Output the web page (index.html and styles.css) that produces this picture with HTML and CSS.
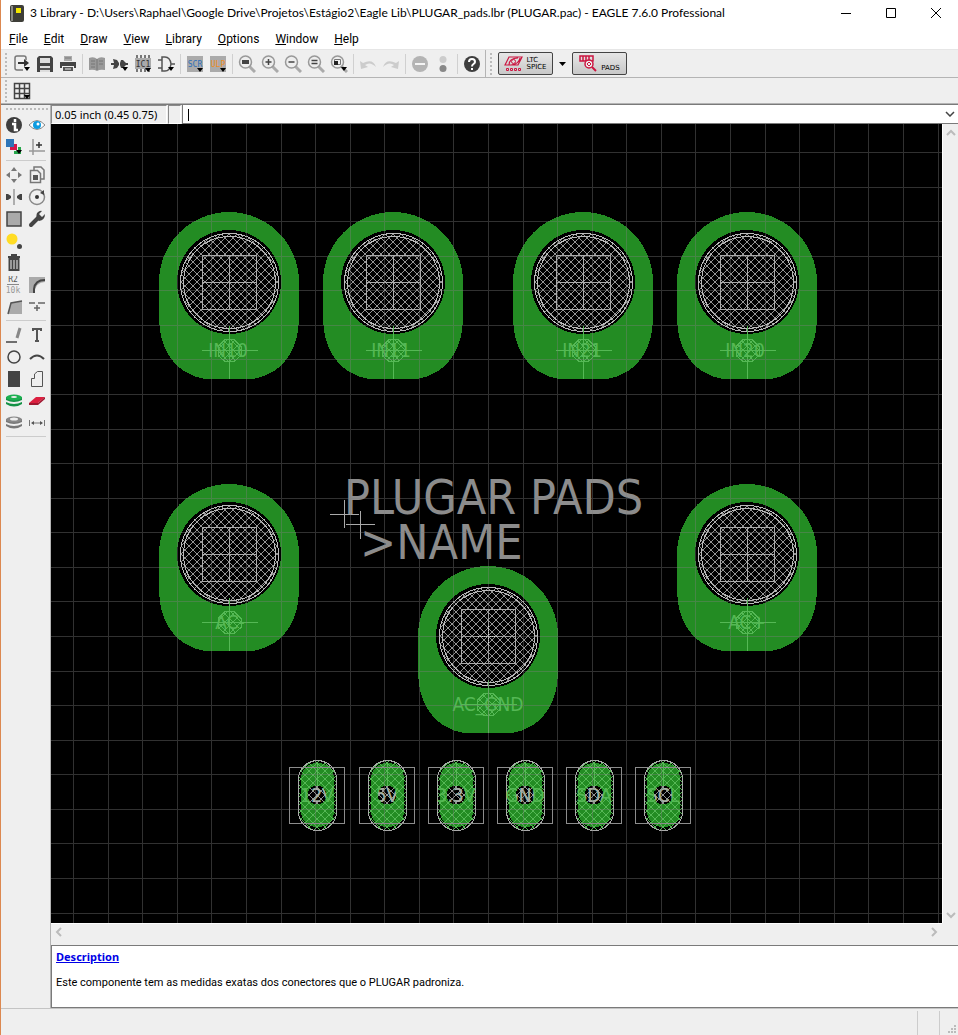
FILE: index.html
```html
<!DOCTYPE html>
<html lang="en">
<head>
<meta charset="utf-8">
<title>3 Library - EAGLE 7.6.0 Professional</title>
<link rel="stylesheet" href="styles.css">
</head>
<body>
<div class="window">
  <header class="titlebar">
    <svg class="app-icon" width="14" height="17" viewBox="0 0 14 17"><rect width="14" height="17" rx="2" fill="#3e3e38"/><path d="M1 1h2v15H1z" fill="#8a8a84"/><path d="M6 3h5v5H6z" fill="#f4e800"/></svg>
    <h1 class="title">3 Library - D:\Users\Raphael\Google Drive\Projetos\Estágio2\Eagle Lib\PLUGAR_pads.lbr (PLUGAR.pac) - EAGLE 7.6.0 Professional</h1>
    <div class="window-buttons">
      <button aria-label="Minimize"><svg width="12" height="12"><path d="M1 6.500h10" stroke="#000"/></svg></button>
      <button aria-label="Maximize"><svg width="12" height="12"><path d="M1.500 1.500h9v9h-9z" stroke="#000" fill="none"/></svg></button>
      <button aria-label="Close"><svg width="12" height="12"><path d="M1 1l10 10M11 1L1 11" stroke="#000"/></svg></button>
    </div>
  </header>
  <nav class="menubar">
    <button><u>F</u>ile</button><button><u>E</u>dit</button><button><u>D</u>raw</button><button><u>V</u>iew</button><button><u>L</u>ibrary</button><button><u>O</u>ptions</button><button><u>W</u>indow</button><button><u>H</u>elp</button>
  </nav>

  <div class="toolbar">
    <i class="grip"></i>
    <div class="actions">
      <button aria-label="Open"><svg viewBox="0 0 18 18"><path d="M13 5V3q0-2-2-2H4Q2 1 2 3v10q0 2 2 2h6" fill="none" stroke="#777" stroke-width="1.500"/><path d="M5 7h6V4l5 4-5 4V9H5z" fill="#333"/><path class="drop" d="M11 12h6l-3 4z"/></svg></button>
      <button aria-label="Save"><svg viewBox="0 0 18 18"><path d="M1 3l2-2h12l2 2v14H1z" fill="#444"/><path d="M4 3h10v5H4zM4 11h10v6H4z" fill="#ddd"/><path d="M4 13h10v2H4z" fill="#555"/></svg></button>
      <button aria-label="Print"><svg viewBox="0 0 18 18"><path d="M5 1h8v5H5z" fill="#aaa"/><path d="M6 3h6" stroke="#777"/><path d="M1 7h16v6h-2v-2H3v2H1z" fill="#444"/><path d="M4 12h10v4H4z" fill="#555"/><path d="M6 14h6" stroke="#eee"/></svg></button>
      <i class="sep"></i>
      <button aria-label="Use"><svg viewBox="0 0 18 18"><path d="M1 3q5-2 8 1 3-3 8-1v12q-5-1-8 1-3-2-8-1z" fill="#999"/><path d="M9 4v11M3 6h4M3 9h4M3 12h4M11 6h4M11 9h4" stroke="#777"/></svg></button>
      <button aria-label="Device"><svg viewBox="0 0 18 18"><path d="M2 4l4 1 2 3v2l-2 3-4 1 1-4H0V8h3zM10 5h2l3 3h2v2h-2l-3 3h-2l-1-3V8z" fill="#444"/><path class="drop" d="M11 12h6l-3 4z"/></svg></button>
      <button aria-label="Package"><svg viewBox="0 0 18 18"><path d="M3 0v17M7 0v17M11 0v17M15 0v17" stroke="#777" stroke-width="2" stroke-dasharray="3 11 3"/><path d="M1 3h16v11H1z" fill="#aaa"/><text x="9" y="12" class="tiny" fill="#333">IC1</text><path class="drop" d="M11 13h6l-3 4z"/></svg></button>
      <button aria-label="Symbol"><svg viewBox="0 0 18 18"><path d="M5 2h3q5 0 6 7-1 7-6 7H5zM1 5h4M1 13h4M14 9h4" fill="none" stroke="#555" stroke-width="1.500"/><path class="drop" d="M11 12h6l-3 4z"/></svg></button>
      <i class="sep"></i>
      <button aria-label="Script"><svg viewBox="0 0 18 18"><path d="M1 1h16v16H1z" fill="#aaa"/><text x="9" y="12" class="tiny" fill="#2f70b8">SCR</text><path class="drop" d="M11 13h6l-3 4z"/></svg></button>
      <button aria-label="Run ULP"><svg viewBox="0 0 18 18"><path d="M1 1h16v16H1z" fill="#aaa"/><text x="9" y="12" class="tiny" fill="#f08c1e">ULP</text><path class="drop" d="M11 13h6l-3 4z"/></svg></button>
      <i class="sep"></i>
      <button aria-label="Fit"><svg viewBox="0 0 18 18"><use href="#lens"/><path d="M4 5h7v4H4z" fill="#444"/></svg></button>
      <button aria-label="Zoom in"><svg viewBox="0 0 18 18"><use href="#lens"/><path d="M4.500 7h6M7.500 4v6" stroke="#444" stroke-width="1.500"/></svg></button>
      <button aria-label="Zoom out"><svg viewBox="0 0 18 18"><use href="#lens"/><path d="M4.500 7h6" stroke="#444" stroke-width="1.500"/></svg></button>
      <button aria-label="Redraw"><svg viewBox="0 0 18 18"><use href="#lens"/><path d="M4.500 5.500h6M4.500 8.500h6" stroke="#444" stroke-width="1.500"/></svg></button>
      <button aria-label="Zoom select"><svg viewBox="0 0 18 18"><use href="#lens"/><path d="M4.500 4.500h6v5h-6z" fill="none" stroke="#777"/><path d="M4 6h4v4H4z" fill="#222"/><path class="drop" d="M11 12h6l-3 4z"/></svg></button>
      <i class="sep"></i>
      <button aria-label="Undo" disabled><svg viewBox="0 0 18 18"><path d="M1 6l1 8 7-2-3-2q5-4 11 2-3-9-13-4z" fill="#ccc"/></svg></button>
      <button aria-label="Redo" disabled><svg viewBox="0 0 18 18"><path d="M17 6l-1 8-7-2 3-2q-5-4-11 2 3-9 13-4z" fill="#ccc"/></svg></button>
      <i class="sep"></i>
      <button aria-label="Stop" disabled><svg viewBox="0 0 18 18"><circle cx="9" cy="9" r="8" fill="#b4b4b4"/><path d="M4 9h10" stroke="#f4f4f4" stroke-width="2"/></svg></button>
      <button aria-label="Go" disabled><svg viewBox="0 0 18 18"><circle cx="9" cy="4.500" r="3.500" fill="#ccc"/><circle cx="9" cy="13.500" r="3.500" fill="#888"/></svg></button>
      <i class="sep"></i>
      <button aria-label="Help"><svg viewBox="0 0 18 18"><circle cx="9" cy="9" r="8" fill="#3e3e3e"/><path d="M6 7q0-3 3-3t3 3q0 1-1.500 2T9 11.500M9 13v2" fill="none" stroke="#fff" stroke-width="2"/></svg></button>
    </div>
    <i class="grip"></i>
    <div class="plugins">
      <button class="plugin"><svg width="19" height="17" viewBox="0 0 19 17"><path d="M1 10L5 2h13l-4 8zM5 10q0-7 9-7M7 10q8-1 9-7" fill="none" stroke="#cc1540" stroke-width="1.200"/><circle cx="9.500" cy="6.500" r="2" fill="#ddd" stroke="#cc1540"/><path d="M2.500 13.500h2v2h-2zM6.500 13.500h2v2h-2zM10.500 13.500h2v2h-2zM14.500 13.500h2v2h-2z" fill="none" stroke="#cc1540"/></svg><span>LTC<br>SPICE</span></button>
      <button class="plugin-more" aria-label="More"><svg width="7" height="4"><path d="M0 0h7L3.500 4z"/></svg></button>
      <button class="plugin pads"><svg width="19" height="17" viewBox="0 0 19 17"><path d="M1 1h13v5H1zM4 1v5M7 1v5M10 1v5" fill="none" stroke="#cc1540" stroke-width="1.500"/><circle cx="10" cy="9" r="4" fill="#eee" stroke="#cc1540" stroke-width="1.500"/><path d="M13 12l4 4" stroke="#cc1540" stroke-width="2"/><path d="M8 9l2-2 2 2-2 2z" fill="none" stroke="#cc1540"/></svg><span>PADS</span></button>
    </div>
  </div>
  <div class="toolbar parameters">
    <i class="grip"></i>
    <button aria-label="Grid"><svg viewBox="0 0 18 18"><path d="M1.500 1.500h15v15h-15zM1 6.500h16M1 11.500h16M6.500 1v16M11.500 1v16" fill="none" stroke="#444" stroke-width="1.500"/><path class="drop" d="M11 13h6l-3 4z"/></svg></button>
  </div>

  <div class="workspace">
    <aside class="palette">
      <i class="grip-top"></i>
      <div class="tools">
        <button aria-label="Info"><svg viewBox="0 0 18 18"><circle cx="9" cy="9" r="8" fill="#3e3e3e"/><path d="M10 3v3M7 8h3v6h3" fill="none" stroke="#fff" stroke-width="2.500"/></svg></button>
        <button aria-label="Show"><svg viewBox="0 0 18 18"><path d="M1 9q8-9 16 0-8 9-16 0z" fill="#fff" stroke="#888"/><circle cx="9" cy="9" r="4" fill="#0c9be0"/><circle cx="10" cy="8" r="1.500" fill="#fff"/></svg></button>
        <button aria-label="Display"><svg viewBox="0 0 18 18"><path d="M1 1h8v8H1z" fill="#2e75b8"/><path d="M9 6h3v6H5V9h4z" fill="#d6184c"/><path d="M13 9h3v7H9v-3h4z" fill="#26a64a"/><path class="drop" d="M11 12h6l-3 4z"/></svg></button>
        <button aria-label="Mark"><svg viewBox="0 0 18 18"><path d="M5 1v16M1 13h16" stroke="#999" stroke-width="1.500"/><path d="M8 7h6M11 4v6" stroke="#333" stroke-width="1.500"/></svg></button>
        <i class="rule"></i>
        <button aria-label="Move"><svg viewBox="0 0 18 18"><path d="M9 1l3 4H6zM9 17l3-4H6zM1 9l4-3v6zM17 9l-4-3v6z" fill="#777"/></svg></button>
        <button aria-label="Copy"><svg viewBox="0 0 18 18"><path d="M6 4V1h7l3 3v9h-3M2.500 4.500h7l3 3v9h-10z" fill="none" stroke="#777" stroke-width="1.500"/><path d="M5 9h5v5H5z" fill="#555"/></svg></button>
        <button aria-label="Mirror"><svg viewBox="0 0 18 18"><path d="M9 1v16" stroke="#999" stroke-width="1.500"/><path d="M1 6h2l3 2v2l-3 2H1zM17 6h-2l-3 2v2l3 2h2z" fill="#444"/></svg></button>
        <button aria-label="Rotate"><svg viewBox="0 0 18 18"><circle cx="9" cy="9" r="7.500" fill="none" stroke="#888" stroke-width="1.500"/><circle cx="9" cy="9" r="2" fill="#333"/><path d="M12 5l4-3v5z" fill="#444"/></svg></button>
        <button aria-label="Group"><svg viewBox="0 0 18 18"><path d="M2 2h14v14H2z" fill="#aaa" stroke="#444" stroke-width="1.500"/></svg></button>
        <button aria-label="Change"><svg viewBox="0 0 18 18"><path d="M3 15l7-7" stroke="#444" stroke-width="4" stroke-linecap="round"/><path d="M9 3q3-3 5-2l-3 3 3 3 3-3q0 6-6 7-4-3-2-8z" fill="#444"/></svg></button>
        <button aria-label="Paste"><svg viewBox="0 0 18 18"><circle cx="7" cy="7" r="5.500" fill="#ffdc24"/><circle cx="14.500" cy="14.500" r="2.500" fill="#444"/></svg></button>
        <span></span>
        <button aria-label="Delete"><svg viewBox="0 0 18 18"><path d="M3 3h12M7 3V1h4v2M4.500 5h9v11h-9zM7.500 6v9M10.500 6v9" fill="none" stroke="#444" stroke-width="2"/></svg></button>
        <span></span>
        <button aria-label="Name"><svg viewBox="0 0 18 18"><text x="8" y="6" class="tiny" fill="#555">R2</text><path d="M2 8.500h12" stroke="#888"/><text x="8" y="17" class="tiny" fill="#999">10k</text></svg></button>
        <button aria-label="Miter"><svg viewBox="0 0 18 18"><path d="M1 1h16v5Q8 6 6 17H1z" fill="#aaa"/><path d="M6 17V13Q7 4 17 4" fill="none" stroke="#444" stroke-width="2"/></svg></button>
        <button aria-label="Split"><svg viewBox="0 0 18 18"><path d="M3 16L6 5l11-2v13z" fill="#aaa"/><path d="M3 16L6 5l11-2" fill="none" stroke="#555" stroke-width="1.500"/></svg></button>
        <button aria-label="Optimize"><svg viewBox="0 0 18 18"><path d="M1 5h6M10 5h7M6 10h6M9 7v6" stroke="#666" stroke-width="1.500"/></svg></button>
        <i class="rule"></i>
        <button aria-label="Wire"><svg viewBox="0 0 18 18"><path d="M1 16h11" stroke="#444" stroke-width="1.500"/><path d="M15 2l-3 10" stroke="#888" stroke-width="3"/></svg></button>
        <button aria-label="Text"><svg viewBox="0 0 18 18"><path d="M5 5V3h8v2M9 3v12M7 15h4" fill="none" stroke="#555" stroke-width="2"/></svg></button>
        <button aria-label="Circle"><svg viewBox="0 0 18 18"><circle cx="9" cy="9" r="6" fill="none" stroke="#444" stroke-width="1.500"/></svg></button>
        <button aria-label="Arc"><svg viewBox="0 0 18 18"><path d="M2 11q7-7 14 0" fill="none" stroke="#444" stroke-width="2"/></svg></button>
        <button aria-label="Rectangle"><svg viewBox="0 0 18 18"><path d="M3 1h12v16H3z" fill="#444"/></svg></button>
        <button aria-label="Polygon"><svg viewBox="0 0 18 18"><path d="M3.500 16.500v-8h3V4l3-2.500h5v15z" fill="none" stroke="#555"/></svg></button>
        <button aria-label="Pad"><svg viewBox="0 0 18 18"><path d="M1 5v7q8 5 16 0V5z" fill="#139145"/><path d="M1 8q8 4 16 0v2q-8 4-16 0z" fill="#eee"/><ellipse cx="9" cy="5.500" rx="8" ry="3" fill="#1cb050"/><ellipse cx="9" cy="5" rx="3" ry="1" fill="#eee"/></svg></button>
        <button aria-label="Smd"><svg viewBox="0 0 18 18"><path d="M1 11l7-6h9l-7 6z" fill="#dc1f3f"/><path d="M1 11h9l7-6v2l-7 6H1z" fill="#9f1730"/></svg></button>
        <button aria-label="Hole"><svg viewBox="0 0 18 18"><path d="M1 5v7q8 5 16 0V5z" fill="#777"/><path d="M1 8q8 4 16 0v2q-8 4-16 0z" fill="#eee"/><ellipse cx="9" cy="5.500" rx="8" ry="3" fill="#888"/><ellipse cx="9" cy="5" rx="4" ry="1.500" fill="#eee"/></svg></button>
        <button aria-label="Dimension"><svg viewBox="0 0 18 18"><path d="M1.500 6v6M16.500 6v6M4 9h10" stroke="#777"/><path d="M3 9l3-2v4zM15 9l-3-2v4z" fill="#555"/></svg></button>
        <i class="rule"></i>
      </div>
    </aside>

    <main class="editor">
      <div class="commandbar">
        <output class="coords">0.05 inch (0.45 0.75)</output>
        <span class="indicator"></span>
        <div class="command"><input type="text" aria-label="Command" value=""><i class="caret"></i><button aria-label="History"><svg width="10" height="6"><path d="M1 1l4 4 4-4" fill="none" stroke="#444" stroke-width="1.500"/></svg></button></div>
      </div>
      <div class="view">
        <svg class="drawing" viewBox="51 124 891 799" preserveAspectRatio="xMidYMid slice" role="img" aria-label="PLUGAR package drawing">
          <defs>
            <g id="lens"><path d="M11 11l6 6" stroke="#aaa" stroke-width="3"/><circle cx="7.500" cy="7" r="6" fill="#eee" stroke="#999" stroke-width="1.500"/></g>
            <pattern id="hatch" width="8" height="8" patternUnits="userSpaceOnUse"><path d="M0 0l8 8M8 0L0 8" stroke="#949494"/></pattern>
            <pattern id="green-hatch" width="8" height="8" patternUnits="userSpaceOnUse"><path d="M0 0l8 8M8 0L0 8" stroke="#55b855"/></pattern>
            <clipPath id="drill"><circle r="9"/></clipPath>
            <g id="pad">
              <path d="M-70 0A70 70 0 0 1 70 0V35C70 68 54 92 24 97H-24C-54 92 -70 68 -70 35Z" fill="#238c23"/>
              <circle r="52" fill="#000"/>
              <circle cx=".5" cy=".5" r="49" fill="url(#hatch)"/>
              <circle cx=".5" cy=".5" r="49" class="outline"/><circle cx=".5" cy=".5" r="46" class="outline"/>
              <path d="M-26.500 -26.500h54v54h-54zM-26 .5h54M.5 -26v54" class="outline"/>
              <path d="M.5 44V97M-27 68.500h56" class="green-line"/>
              <path d="M-4 57.500h9l7 7v9l-7 6h-9l-7-6v-9z" fill="url(#green-hatch)" class="green-outline"/>
            </g>
            <g id="slot">
              <rect x="-16" y="-32" width="33" height="64" rx="16" fill="#238c23"/>
              <rect x="-18" y="-34" width="37" height="69" rx="18" fill="url(#green-hatch)"/>
              <rect x="-18.500" y="-34.500" width="38" height="70" rx="19" class="outline"/>
              <rect x="-27.500" y="-27.500" width="55" height="56" class="frame"/>
              <path d="M.5 -32V-9" class="green-line"/>
              <circle r="9.500" fill="#000"/>
              <circle r="9.500" fill="url(#hatch)"/>
            </g>
          </defs>
          <rect x="51" y="124" width="891" height="799" fill="#000"/>
          <use href="#pad" x="229" y="282"/><use href="#pad" x="393" y="282"/><use href="#pad" x="583" y="282"/><use href="#pad" x="747" y="282"/>
          <use href="#pad" x="229" y="554"/><use href="#pad" x="747" y="554"/><use href="#pad" x="488" y="636"/>
          <g class="pad-name">
            <text x="228" y="357">IN10</text><text x="391" y="357">IN11</text><text x="582" y="357">IN21</text><text x="745" y="357">IN20</text>
            <text x="230" y="629">AC-</text><text x="747" y="629">AC+</text><text x="488" y="711">AC_GND</text>
          </g>
          <g class="slots">
            <g transform="translate(317 795)"><use href="#slot"/><text y="7">12V</text><text y="7" class="inside">12V</text></g>
            <g transform="translate(387 795)"><use href="#slot"/><text y="7">5V</text><text y="7" class="inside">5V</text></g>
            <g transform="translate(456 795)"><use href="#slot"/><text y="7">3.3V</text><text y="7" class="inside">3.3V</text></g>
            <g transform="translate(525 795)"><use href="#slot"/><text y="7">GND</text><text y="7" class="inside">GND</text></g>
            <g transform="translate(594 795)"><use href="#slot"/><text y="7">SDA</text><text y="7" class="inside">SDA</text></g>
            <g transform="translate(663 795)"><use href="#slot"/><text y="7">SCL</text><text y="7" class="inside">SCL</text></g>
          </g>
          <text x="344" y="514" class="caption">PLUGAR PADS</text>
          <text x="360" y="559" class="caption">&gt;NAME</text>
          <path d="M330 514.500h29M344.500 500v28M346 524.500h29M360.500 511v28" class="outline"/>
          <path d="M478 636.500h20M488.500 626v20" class="origin"/>
          <path class="grid" d="M73.500 124v799M108.500 124v799M142.500 124v799M177.500 124v799M211.500 124v799M246.500 124v799M281.500 124v799M315.500 124v799M350.500 124v799M384.500 124v799M419.500 124v799M453.500 124v799M488.500 124v799M523.500 124v799M557.500 124v799M592.500 124v799M626.500 124v799M661.500 124v799M695.500 124v799M730.500 124v799M765.500 124v799M799.500 124v799M834.500 124v799M868.500 124v799M903.500 124v799M938.500 124v799M51 152.500h891M51 187.500h891M51 221.500h891M51 256.500h891M51 290.500h891M51 325.500h891M51 359.500h891M51 394.500h891M51 429.500h891M51 463.500h891M51 498.500h891M51 532.500h891M51 567.500h891M51 601.500h891M51 636.500h891M51 671.500h891M51 705.500h891M51 740.500h891M51 774.500h891M51 809.500h891M51 843.500h891M51 878.500h891M51 913.500h891"/>
        </svg>
        <div class="scroll vertical"><svg width="10" height="8"><path d="M1 6l4-4 4 4" class="chevron"/></svg><svg width="10" height="8"><path d="M1 2l4 4 4-4" class="chevron"/></svg></div>
        <div class="scroll horizontal"><svg width="8" height="10"><path d="M6 1L2 5l4 4" class="chevron"/></svg><svg width="8" height="10"><path d="M2 1l4 4-4 4" class="chevron"/></svg></div>
      </div>
      <section class="description">
        <a href="#description">Description</a>
        <p>Este componente tem as medidas exatas dos conectores que o PLUGAR padroniza.</p>
      </section>
    </main>
  </div>
  <footer class="statusbar"><i></i><i></i><svg width="10" height="10"><path d="M7 1h2M4 4h2M7 4h2M1 7h2M4 7h2M7 7h2" stroke="#bbb" stroke-width="2"/></svg></footer>
</div>
</body>
</html>
```

FILE: styles.css
```css
* { box-sizing: border-box; }
body { margin: 0; background: #efefef; color: #000; font: 12px/16px Roboto, "Open Sans", sans-serif; }
button { border: 0; padding: 0; background: none; color: inherit; font: inherit; display: flex; align-items: center; justify-content: center; }
svg { display: block; }
.window { display: flex; flex-direction: column; min-height: 100vh; border-left: 1px solid #dc8850; }

.titlebar { display: flex; align-items: center; height: 26px; padding-left: 9px; background: #fff; }
.app-icon { flex: none; }
.title { margin: 0 0 0 6px; font: 12px/16px Lato, Roboto, sans-serif; white-space: nowrap; flex: 1; min-width: 0; }
.window-buttons { display: flex; }
.window-buttons button { width: 45px; height: 24px; }

.menubar { display: flex; gap: 16px; height: 24px; padding: 3px 8px 0; background: #fff; border-bottom: 1px solid #e6e6e6; }

.toolbar { display: flex; align-items: center; height: 28px; border-bottom: 1px solid #b4b4b4; }
.grip { width: 3px; height: 22px; margin: 0 2px 0 4px; border-left: 2px dotted #bbb; }
.actions { display: flex; align-items: center; height: 100%; padding-right: 2px; border-right: 1px solid #b4b4b4; }
.toolbar button[aria-label] svg { flex: none; }
.actions button, .parameters button { width: 23px; height: 24px; }
.actions svg, .parameters svg { width: 18px; height: 18px; }
.sep { width: 1px; height: 20px; margin: 0 2px 0 3px; background: #d0d0d0; }
.tiny { font: 8px "DejaVu Sans Mono", monospace; text-anchor: middle; }
.drop { fill: #000; }
.plugins { display: flex; align-items: center; padding-left: 3px; }
.plugin { width: 55px; height: 23px; gap: 3px; border: 1px solid #444; border-radius: 2px; background: linear-gradient(#e6e6e6, #c8c8c8); font: 7px/7px "DejaVu Sans", sans-serif; text-align: left; }
.pads span { padding-top: 10px; }
.plugin-more { width: 19px; height: 23px; }
.parameters { height: 26px; }

.workspace { flex: 1; display: flex; border-top: 1px solid #7a7a7a; min-height: 0; }
.palette { width: 50px; border-right: 1px solid #b4b4b4; padding: 3px 0 0 1px; }
.grip-top { display: block; width: 42px; height: 6px; margin-left: 4px; border-top: 2px dotted #bbb; }
.tools { display: grid; grid-template-columns: 23px 23px; grid-auto-rows: minmax(6px, auto); }
.tools button { height: 22px; }
.tools svg { width: 18px; height: 18px; }
.rule { grid-column: 1 / -1; height: 1px; margin: 2px 2px 3px 4px; background: #ccc; }

.editor { flex: 1; min-width: 0; display: flex; flex-direction: column; }
.commandbar { display: flex; gap: 1px; height: 19px; }
.coords, .indicator { border: 1px solid #8a8a8a; border-right-color: #fff; border-bottom-color: #fff; }
.coords { width: 116px; padding-left: 3px; font: 11px/18px "Noto Sans", sans-serif; white-space: nowrap; }
.indicator { width: 13px; }
.command { position: relative; flex: 1; display: flex; background: #fff; border: 1px solid #7a7a7a; border-width: 0 0 1px 1px; }
.command input { flex: 1; min-width: 0; border: 0; padding: 0 5px; outline: 0; background: none; font: inherit; }
.command button { width: 16px; }
.caret { position: absolute; left: 5px; top: 4px; width: 1px; height: 12px; background: #000; }

.view { flex: 1; min-height: 0; display: grid; grid-template: minmax(0, 1fr) 22px / minmax(0, 1fr) 16px; }
.drawing { width: 100%; height: 100%; min-height: 0; shape-rendering: crispEdges; }
.scroll { display: flex; justify-content: space-between; align-items: center; }
.vertical { flex-direction: column; padding: 5px 0 4px; border-left: 1px solid #fff; }
.horizontal { padding: 0 4px 5px; border-top: 1px solid #fff; }
.chevron { fill: none; stroke: #bbb; stroke-width: 2; }
.outline { fill: none; stroke: #aaa; }
circle.outline { stroke: #bbb; }
.frame { fill: none; stroke: #8c8c8c; }
.green-line { fill: none; stroke: #55b855; }
.green-outline { stroke: #55b855; }
.grid { stroke: #808080; stroke-opacity: .38; }
.origin { stroke: #fff; stroke-dasharray: 1 1; }
.pad-name, .slots { font: 19px "DejaVu Sans Condensed", "DejaVu Sans", sans-serif; text-anchor: middle; fill: #55b855; }
.slots .inside { fill: #aaa; clip-path: url(#drill); }
.caption { font: 48px "DejaVu Sans Condensed", "DejaVu Sans", sans-serif; fill: #8c8c8c; }

.description { height: 63px; padding: 3px 4px; background: #fff; border: 1px solid #7a7a7a; border-right: 0; font: 11px/16px Roboto, sans-serif; }
.description a { font-family: "Noto Sans", sans-serif; font-weight: 700; color: #0000e6; }
.description p { margin: 9px 0 0; }
.statusbar { display: flex; justify-content: flex-end; align-items: flex-end; height: 28px; padding: 2px 1px 1px; border-top: 1px solid #c4c4c4; }
.statusbar i { width: 22px; height: 100%; border-left: 1px solid #ccc; }
.statusbar i + i { width: 8px; }
```
